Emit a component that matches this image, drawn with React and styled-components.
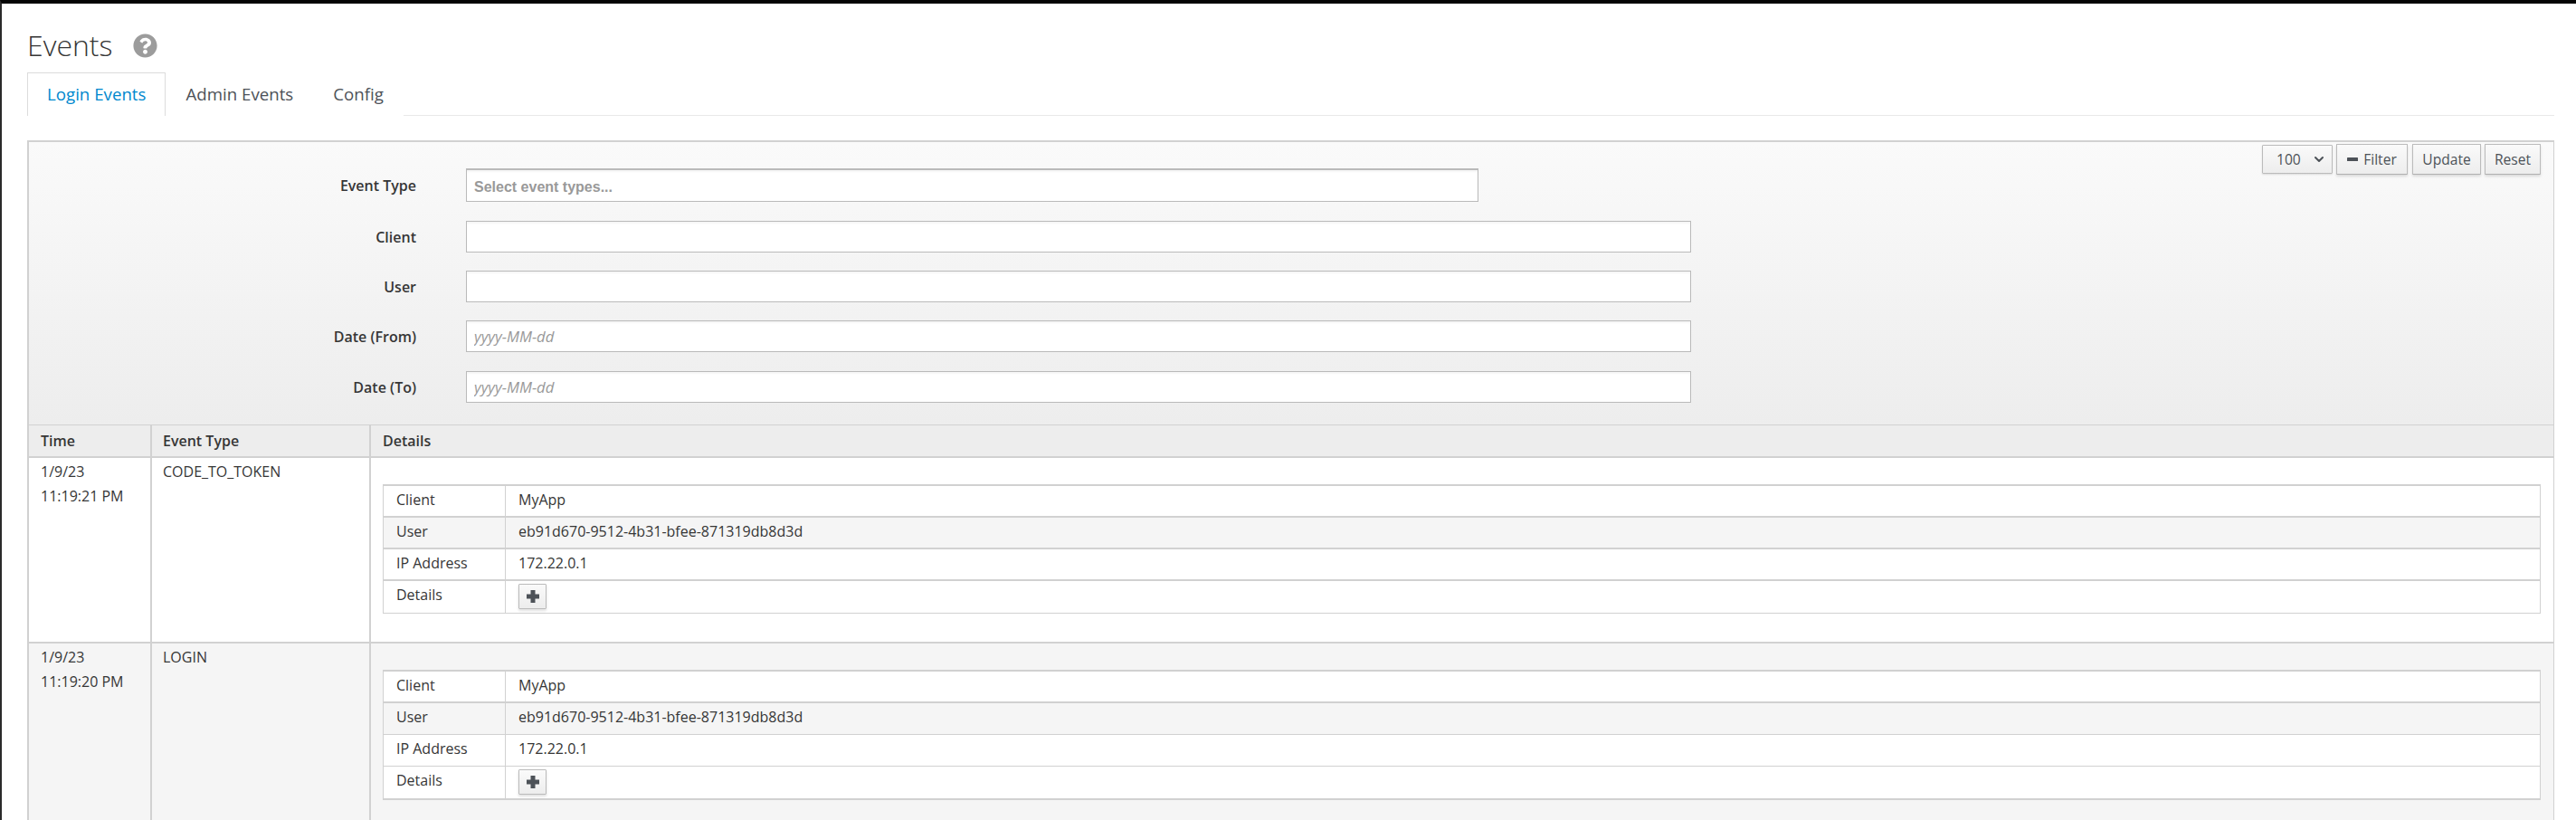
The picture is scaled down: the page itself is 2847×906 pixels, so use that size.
import React from 'react'
import styled, { createGlobalStyle } from 'styled-components'
import { FaQuestionCircle } from 'react-icons/fa'
import { ChevronDown } from 'lucide-react'

const GlobalStyle = createGlobalStyle`
  html, body {
    margin: 0;
    padding: 0;
    background: #fff;
    overflow: hidden;
  }
  body {
    font-family: "Open Sans", "Liberation Sans", sans-serif;
    font-size: 16px;
    color: #363636;
  }
  * {
    box-sizing: border-box;
  }
`

const Page = styled.div`
  width: 2847px;
  height: 906px;
  overflow: hidden;
  border-top: 4px solid #050505;
  border-left: 2px solid #2a2a2a;
  padding: 0 24px 0 28px;
`

const TitleRow = styled.div`
  display: flex;
  align-items: center;
  height: 44px;
  margin: 24px 0 8px;
`

const Title = styled.h1`
  margin: 0;
  font-size: 32px;
  font-weight: 300;
  line-height: 44px;
  color: #363636;
`

const HelpIcon = styled(FaQuestionCircle)`
  width: 27px;
  height: 27px;
  margin-left: 23px;
  color: #9c9c9c;
`

const Tabs = styled.div`
  display: flex;
  height: 48px;
  border-bottom: 1px solid #e8e8e8;
`

const Tab = styled.div`
  padding: 0 21px;
  margin-bottom: -1px;
  line-height: 46px;
  font-size: 18.7px;
  color: ${({ $active }) => ($active ? '#0088ce' : '#4d5258')};
  background: #fff;
  border: 1px solid ${({ $active }) => ($active ? '#dcdcdc' : 'transparent')};
  border-bottom: none;
`

const FilterPanel = styled.div`
  display: flex;
  justify-content: space-between;
  align-items: flex-start;
  height: 314px;
  margin-top: 27px;
  background: linear-gradient(to bottom, #fafafa, #ededed);
  border-top: 2px solid #d1d1d1;
  border-left: 2px solid #d1d1d1;
  border-right: 1px solid #d1d1d1;
`

const FilterForm = styled.form`
  display: flex;
  flex-direction: column;
  padding-top: 29px;
`

const Field = styled.div`
  display: flex;
  align-items: center;
  margin-bottom: ${({ $after }) => $after}px;
`

const FieldLabel = styled.label`
  width: 428px;
  margin-right: 55px;
  text-align: right;
  font-weight: 550;
  color: #363636;
`

const Input = styled.input`
  display: block;
  width: ${({ $wide }) => ($wide ? '1354px' : '1119px')};
  height: ${({ $wide }) => ($wide ? '35px' : '37px')};
  padding: ${({ $wide }) => ($wide ? '0 8px' : '4px 8px 0')};
  background: #fff;
  border: 1px solid #bababa;
  border-top-width: ${({ $wide }) => ($wide ? '1px' : '2px')};
  border-radius: 0;
  box-shadow: inset 0 2px 2px rgba(0, 0, 0, 0.04);
  font-family: ${({ $wide }) => ($wide ? '"Open Sans", sans-serif' : '"Liberation Sans", sans-serif')};
  font-size: ${({ $date }) => ($date ? '16.7px' : '16px')};
  font-weight: ${({ $wide }) => ($wide ? '400' : '700')};
  font-style: ${({ $date }) => ($date ? 'italic' : 'normal')};

  &::placeholder {
    color: #999;
    opacity: 1;
  }
`

const Toolbar = styled.div`
  display: flex;
  align-items: center;
  padding: 2px 14px 0 0;
`

const SelectBox = styled.div`
  position: relative;
  width: 78px;
  height: 32px;
  margin-right: 4px;
`

const PageSize = styled.select`
  appearance: none;
  width: 100%;
  height: 100%;
  padding: 0 0 0 15px;
  background: linear-gradient(to bottom, #fafafa, #ededed);
  border: 1px solid #bbb;
  border-radius: 1px;
  box-shadow: 0 1px 2px rgba(0, 0, 0, 0.12);
  font-family: "Open Sans", sans-serif;
  font-size: 15.6px;
  color: #4d5258;
`

const SelectArrow = styled(ChevronDown)`
  position: absolute;
  top: 8px;
  right: 7px;
  width: 16px;
  height: 16px;
  color: #4d5258;
  stroke-width: 3;
  pointer-events: none;
`

const Button = styled.button`
  display: flex;
  align-items: center;
  justify-content: center;
  gap: 6px;
  width: ${({ $width }) => $width}px;
  height: 34px;
  margin-right: ${({ $gap }) => $gap || 0}px;
  padding: 0;
  background: linear-gradient(to bottom, #fafafa, #ededed);
  border: 1px solid #bbb;
  border-bottom-color: #b0b0b0;
  border-radius: 1px;
  box-shadow: 0 2px 3px rgba(0, 0, 0, 0.12);
  font-family: "Open Sans", sans-serif;
  font-size: 15.6px;
  color: #4d5258;
`

const EventsTable = styled.table`
  width: 2793px;
  table-layout: fixed;
  border-collapse: separate;
  border-spacing: 0;
`

const HeadCell = styled.th`
  height: 37px;
  padding: 0 0 0 ${({ $pad }) => $pad}px;
  width: ${({ $width }) => $width}px;
  text-align: left;
  font-weight: 550;
  background: #ededed;
  border-top: 1px solid #d1d1d1;
  border-bottom: 2px solid #d1d1d1;
  border-left: 2px solid #d1d1d1;
  border-right: ${({ $last }) => ($last ? '1px solid #d1d1d1' : 'none')};
`

const EventRow = styled.tr`
  background: ${({ $striped }) => ($striped ? '#f5f5f5' : '#fff')};
`

const Cell = styled.td`
  height: 203px;
  vertical-align: top;
  padding: ${({ $last, $pad }) => ($last ? '29px 14px 0 13px' : `2px 0 0 ${$pad}px`)};
  line-height: 27px;
  border-left: 2px solid #d1d1d1;
  border-right: ${({ $last }) => ($last ? '1px solid #d1d1d1' : 'none')};
  border-top: ${({ $striped }) => ($striped ? '2px solid #d1d1d1' : 'none')};
`

const DetailTable = styled.table`
  width: 100%;
  table-layout: fixed;
  border-collapse: separate;
  border-spacing: 0;
  background: #fff;
  border-left: 1px solid #d1d1d1;
  border-right: 1px solid #d1d1d1;
  border-bottom: ${({ $bottom }) => $bottom}px solid #d1d1d1;
`

const DetailRow = styled.tr`
  background: ${({ $shade }) => ($shade ? '#f5f5f5' : '#fff')};
`

const DetailCell = styled.td`
  height: ${({ $height }) => $height}px;
  width: ${({ $width }) => $width || 'auto'};
  padding: 2px 0 0 14px;
  vertical-align: top;
  line-height: 27px;
  border-top: ${({ $top }) => $top}px solid #d1d1d1;
  border-left: ${({ $value }) => ($value ? '1px solid #d1d1d1' : 'none')};
`

const ExpandButton = styled.button`
  display: flex;
  align-items: center;
  justify-content: center;
  width: 31px;
  height: 28px;
  margin: 1px 0 0;
  padding: 0;
  background: linear-gradient(to bottom, #fafafa, #ededed);
  border: 1px solid #bbb;
  border-radius: 1px;
  box-shadow: 0 2px 3px rgba(0, 0, 0, 0.12);
  color: #4d5258;
`

const MinusIcon = () => (
  <svg width="12" height="4" viewBox="0 0 12 4">
    <rect width="12" height="4" rx="0.6" fill="currentColor" />
  </svg>
)

const PlusIcon = () => (
  <svg width="14" height="14" viewBox="0 0 14 14">
    <path d="M4.5 0h5v4.5H14v5H9.5V14h-5V9.5H0v-5h4.5z" fill="currentColor" />
  </svg>
)

const events = [
  {
    date: '1/9/23',
    time: '11:19:21 PM',
    type: 'CODE_TO_TOKEN',
    tops: [2, 2, 2, 2],
    heights: [35, 35, 35, 37],
    bottom: 1,
  },
  {
    date: '1/9/23',
    time: '11:19:20 PM',
    type: 'LOGIN',
    tops: [2, 2, 1, 1],
    heights: [35, 36, 35, 36],
    bottom: 2,
  },
]

const details = [
  { label: 'Client', value: 'MyApp' },
  { label: 'User', value: 'eb91d670-9512-4b31-bfee-871319db8d3d', shade: true },
  { label: 'IP Address', value: '172.22.0.1' },
  { label: 'Details', expand: true },
]

const App = () => {
  return (
    <Page>
      <GlobalStyle />
      <TitleRow>
        <Title>Events</Title>
        <HelpIcon />
      </TitleRow>
      <Tabs>
        <Tab $active>Login Events</Tab>
        <Tab>Admin Events</Tab>
        <Tab>Config</Tab>
      </Tabs>
      <FilterPanel>
        <FilterForm>
          <Field $after={21}>
            <FieldLabel>Event Type</FieldLabel>
            <Input placeholder="Select event types..." />
          </Field>
          <Field $after={20}>
            <FieldLabel>Client</FieldLabel>
            <Input $wide />
          </Field>
          <Field $after={20}>
            <FieldLabel>User</FieldLabel>
            <Input $wide />
          </Field>
          <Field $after={21}>
            <FieldLabel>Date (From)</FieldLabel>
            <Input $wide $date placeholder="yyyy-MM-dd" />
          </Field>
          <Field $after={0}>
            <FieldLabel>Date (To)</FieldLabel>
            <Input $wide $date placeholder="yyyy-MM-dd" />
          </Field>
        </FilterForm>
        <Toolbar>
          <SelectBox>
            <PageSize defaultValue="100">
              <option>5</option>
              <option>10</option>
              <option>50</option>
              <option>100</option>
            </PageSize>
            <SelectArrow />
          </SelectBox>
          <Button $width={79} $gap={5}>
            <MinusIcon />
            Filter
          </Button>
          <Button $width={76} $gap={4}>Update</Button>
          <Button $width={62}>Reset</Button>
        </Toolbar>
      </FilterPanel>
      <EventsTable>
        <thead>
          <tr>
            <HeadCell $width={136} $pad={13}>Time</HeadCell>
            <HeadCell $width={242} $pad={12}>Event Type</HeadCell>
            <HeadCell $pad={13} $last>Details</HeadCell>
          </tr>
        </thead>
        <tbody>
          {events.map((ev, i) => (
            <EventRow key={ev.time} $striped={i % 2 === 1}>
              <Cell $striped={i % 2 === 1} $pad={13}>
                {ev.date}
                <br />
                {ev.time}
              </Cell>
              <Cell $striped={i % 2 === 1} $pad={12}>{ev.type}</Cell>
              <Cell $striped={i % 2 === 1} $last>
                <DetailTable $bottom={ev.bottom}>
                  <tbody>
                    {details.map((d, j) => (
                      <DetailRow key={d.label} $shade={d.shade}>
                        <DetailCell $width="134px" $top={ev.tops[j]} $height={ev.heights[j]}>{d.label}</DetailCell>
                        <DetailCell $value $top={ev.tops[j]} $height={ev.heights[j]}>
                          {d.expand ? (
                            <ExpandButton type="button">
                              <PlusIcon />
                            </ExpandButton>
                          ) : (
                            d.value
                          )}
                        </DetailCell>
                      </DetailRow>
                    ))}
                  </tbody>
                </DetailTable>
              </Cell>
            </EventRow>
          ))}
        </tbody>
      </EventsTable>
    </Page>
  )
}

export default App
